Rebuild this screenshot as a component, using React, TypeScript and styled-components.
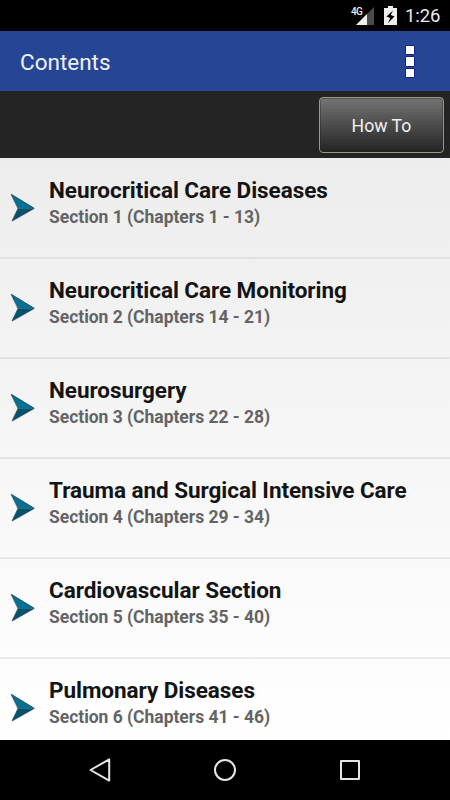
import React from "react";
import styled, { createGlobalStyle } from "styled-components";

const GlobalStyle = createGlobalStyle`
  * { box-sizing: border-box; }
  html, body { margin: 0; background: #000; }
  body { font-family: Roboto, "Noto Sans", sans-serif; }
`;

const Screen = styled.div`
  width: 450px;
  height: 800px;
  display: flex;
  flex-direction: column;
  overflow: hidden;
  background: #000;
`;

const StatusBar = styled.header`
  flex: none;
  height: 31px;
  display: flex;
  justify-content: flex-end;
  padding-right: 10px;
  background: #000;
`;

const Network = styled.div`
  display: flex;
  padding-top: 7px;
  margin-right: 10px;
  svg { display: block; }
`;

const NetworkType = styled.span`
  width: 12px;
  margin-right: -7px;
  color: #eee;
  font-size: 10px;
  font-weight: 500;
  line-height: 10px;
  letter-spacing: -0.6px;
`;

const Battery = styled.svg`
  display: block;
  margin-top: 6px;
  margin-right: 8px;
`;

const Clock = styled.time`
  width: 35px;
  color: #ececec;
  font-size: 18.5px;
  line-height: 33px;
  letter-spacing: -0.1px;
  white-space: nowrap;
`;

const TitleBar = styled.div`
  flex: 0 0 60px;
  display: flex;
  align-items: center;
  justify-content: space-between;
  padding: 0 35px 0 20px;
  background: #264595;
`;

const Title = styled.h1`
  margin: 0;
  padding-top: 2px;
  color: #f0f1f8;
  font-size: 22.5px;
  font-weight: 400;
  line-height: 28px;
`;

const MenuButton = styled.button`
  display: grid;
  gap: 1px;
  padding: 1px 0 0;
  border: 0;
  background: none;
`;

const MenuSquare = styled.span`
  width: 10px;
  height: 10.4px;
  border: 1px solid #10208c;
  border-radius: 1px;
  background: #fff;
`;

const Toolbar = styled.div`
  flex: 0 0 67px;
  display: flex;
  justify-content: flex-end;
  padding: 6px 6px 0 0;
  background: #242424;
`;

const HowToButton = styled.button`
  width: 125px;
  height: 56px;
  padding: 2px 0 0;
  border: 1px solid #98978a;
  border-radius: 4px;
  background: linear-gradient(#747474, #242424);
  box-shadow: inset 0 0 0 1px rgba(30, 30, 30, 0.35);
  color: #f1f1f1;
  font-family: inherit;
  font-size: 17.7px;
`;

const Sections = styled.ul`
  flex: 1;
  min-height: 0;
  overflow: hidden;
  margin: 0;
  padding: 0;
  list-style: none;
  background: linear-gradient(#ededed, #ffffff);
`;

const SectionRow = styled.li`
  display: flex;
  height: 100px;
  padding: 18px 0 0 9px;
  box-shadow: inset 0 -1px rgba(0, 0, 0, 0.055), 0 1px rgba(0, 0, 0, 0.08);
`;

const Arrow = styled.svg`
  flex: none;
  margin-top: 16px;
  margin-right: 12px;
`;

const SectionName = styled.h2`
  margin: 0;
  color: #141414;
  font-size: 22.5px;
  font-weight: 700;
  line-height: 28px;
  letter-spacing: -0.05px;
  white-space: nowrap;
`;

const Chapters = styled.p`
  margin: 0;
  color: #646464;
  font-size: 17.5px;
  font-weight: 700;
  line-height: 26px;
  letter-spacing: -0.03px;
`;

const NavBar = styled.nav`
  flex: 0 0 60px;
  display: grid;
  grid-template-columns: repeat(3, 26px);
  justify-content: center;
  align-items: center;
  column-gap: 99px;
  background: #000;
`;

const NavIcon = styled.svg`
  display: block;
  fill: none;
  stroke: #e6e6e6;
  stroke-width: 2;
  stroke-linejoin: round;
`;

const sections = [
  ["Neurocritical Care Diseases", "Section 1 (Chapters 1 - 13)"],
  ["Neurocritical Care Monitoring", "Section 2 (Chapters 14 - 21)"],
  ["Neurosurgery", "Section 3 (Chapters 22 - 28)"],
  ["Trauma and Surgical Intensive Care", "Section 4 (Chapters 29 - 34)"],
  ["Cardiovascular Section", "Section 5 (Chapters 35 - 40)"],
  ["Pulmonary Diseases", "Section 6 (Chapters 41 - 46)"],
];

const SectionArrow = () => (
  <Arrow width="28" height="32" viewBox="0 0 28 32">
    <path d="M1.5 3 L25 17.5 L2.5 30.5 L8.5 18Z" fill="#777" opacity=".25" />
    <path d="M2 2 L25.5 16.3 L9.3 16.3Z" fill="#087090" />
    <path d="M25.5 16.3 L3 29 L9.3 16.3Z" fill="#03526e" />
    <path d="M2.2 2.2 L25.2 16.3 L3.2 28.7 L9.1 16.3Z" fill="none" stroke="#123f58" strokeWidth=".7" />
  </Arrow>
);

export default function App() {
  return (
    <>
      <GlobalStyle />
      <Screen>
        <StatusBar>
          <Network>
            <NetworkType>4G</NetworkType>
            <svg width="18" height="18" viewBox="0 0 18 18">
              <path d="M18 0V18H0Z" fill="#4a4a4a" />
              <path d="M11 7V18H0Z" fill="#eee" />
            </svg>
          </Network>
          <Battery width="13" height="19" viewBox="0 0 13 19">
            <path d="M4 0H9V2H13V19H0V2H4Z" fill="#eee" />
            <path d="M9 4.5L2.5 10.5L6.2 12L4 17L10.5 10.5L6.8 9Z" fill="#000" />
          </Battery>
          <Clock>1:26</Clock>
        </StatusBar>
        <TitleBar>
          <Title>Contents</Title>
          <MenuButton aria-label="Menu">
            <MenuSquare />
            <MenuSquare />
            <MenuSquare />
          </MenuButton>
        </TitleBar>
        <Toolbar>
          <HowToButton>How To</HowToButton>
        </Toolbar>
        <Sections>
          {sections.map(([name, chapters]) => (
            <SectionRow key={name}>
              <SectionArrow />
              <div>
                <SectionName>{name}</SectionName>
                <Chapters>{chapters}</Chapters>
              </div>
            </SectionRow>
          ))}
        </Sections>
        <NavBar>
          <NavIcon width="26" height="26" viewBox="0 0 26 26">
            <path d="M22.2 2.4V23.6L3.5 13Z" />
          </NavIcon>
          <NavIcon width="26" height="26" viewBox="0 0 26 26">
            <circle cx="13" cy="13" r="10" />
          </NavIcon>
          <NavIcon width="26" height="26" viewBox="0 0 26 26">
            <rect x="4" y="4" width="18" height="18" />
          </NavIcon>
        </NavBar>
      </Screen>
    </>
  );
}
